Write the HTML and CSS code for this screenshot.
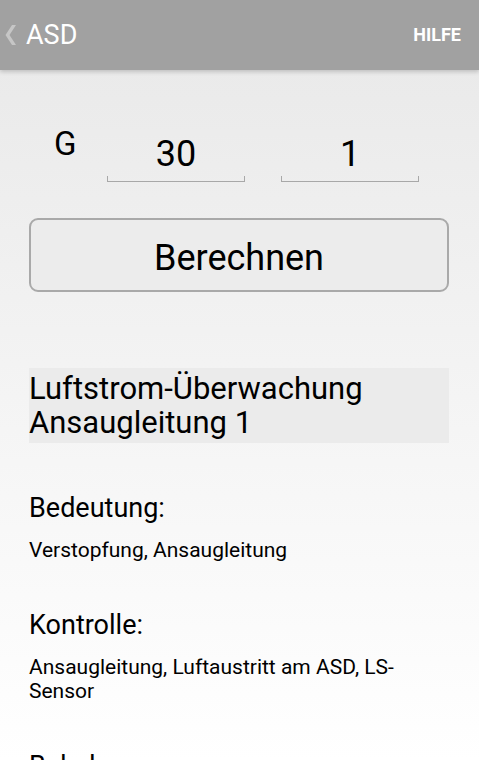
FILE: index.html
```html
<!DOCTYPE html>
<html lang="de">
<head>
  <meta charset="UTF-8" />
  <meta name="viewport" content="width=device-width, initial-scale=1.0"/>
  <title>ASD</title>
  <link rel="stylesheet" href="styles.css">
</head>
<body>

<!-- Action bar -->
<header class="actionbar">
  <div class="up">
    <svg class="chevron" width="11" height="20" viewBox="0 0 11 20">
      <polygon points="7,0 11,0 4.5,10 11,20 7,20 0.5,10" />
    </svg>
    <span class="title">ASD</span>
  </div>
  <span class="action">HILFE</span>
</header>

<main class="content">
  <div class="code-row">
    <span class="code-label">G</span>
    <label class="field">
      <input class="num" type="text" value="30">
      <span class="field-line"></span>
    </label>
    <label class="field">
      <input class="num" type="text" value="1">
      <span class="field-line"></span>
    </label>
  </div>

  <button class="calc">Berechnen</button>

  <h1 class="result-title">Luftstrom-Überwachung Ansaugleitung 1</h1>

  <h2 class="section-title">Bedeutung:</h2>
  <p class="section-text">Verstopfung, Ansaugleitung</p>

  <h2 class="section-title">Kontrolle:</h2>
  <p class="section-text">Ansaugleitung, Luftaustritt am ASD, LS-Sensor</p>

  <h2 class="section-title">Behebung:</h2>
  <p class="section-text">Ansaugleitung reinigen</p>
</main>

</body>
</html>
```

FILE: styles.css
```css
body {
  margin: 0;
  font-family: Roboto, "Noto Sans", sans-serif;
  color: #000;
  background: linear-gradient(#e8e8e8, #ffffff) fixed;
  min-height: 760px;
}
.actionbar {
  height: 70px;
  background: #a1a1a1;
  display: flex;
  align-items: center;
  justify-content: space-between;
  padding: 0 18px 0 5px;
  box-shadow: 0 2px 4px rgba(0, 0, 0, 0.18);
}
.up {
  display: flex;
  align-items: center;
}
.chevron {
  display: block;
  margin-right: 10px;
  fill: #c6c6c6;
}
.title {
  color: #fff;
  font-size: 27px;
  line-height: 32px;
}
.action {
  color: #fff;
  font-size: 18px;
  font-weight: bold;
  line-height: 20px;
}
.content {
  padding: 0 30px 40px 29px;
}

/* Eingabe Code */
.code-row {
  display: flex;
  align-items: flex-start;
  gap: 36px;
  padding-left: 25px;
  margin-top: 57px;
}
.code-label {
  width: 17px;
  font-size: 33px;
  line-height: 33px;
}
.field {
  display: block;
  width: 138px;
  margin-top: 9px;
}
.num {
  display: block;
  width: 100%;
  height: 36px;
  padding: 0;
  border: none;
  outline: none;
  background: transparent;
  font-family: Roboto, "Noto Sans", sans-serif;
  font-size: 36px;
  color: #000;
  text-align: center;
}
.field-line {
  display: block;
  height: 5px;
  margin-top: 4px;
  border: 1px solid #a8a8a8;
  border-top: none;
}
.calc {
  display: block;
  width: 100%;
  height: 74px;
  margin-top: 36px;
  padding: 20px 0 14px;
  box-sizing: border-box;
  border: 2px solid #a9a9a9;
  border-radius: 9px;
  background: #ececec;
  font-family: Roboto, "Noto Sans", sans-serif;
  font-size: 36px;
  line-height: 36px;
  color: #000;
}

/* Ergebnis */
.result-title {
  margin: 76px 0 0;
  padding: 4px 0 3px;
  background: #ebebeb;
  font-size: 31px;
  line-height: 34px;
  font-weight: normal;
}
.section-title {
  margin: 47px 0 0;
  font-size: 27px;
  line-height: 32px;
  font-weight: normal;
}
.result-title + .section-title {
  margin-top: 49px;
}
.section-text {
  margin: 14px 0 0;
  font-size: 21px;
  line-height: 24px;
}
```
